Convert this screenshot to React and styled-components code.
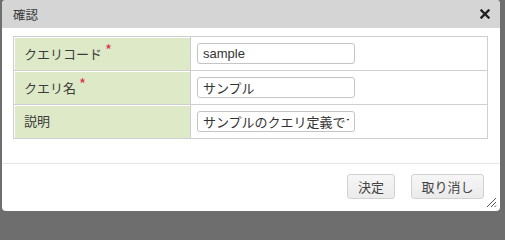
import React from "react";
import styled, { createGlobalStyle } from "styled-components";

const GlobalStyle = createGlobalStyle`
  html, body {
    margin: 0;
    padding: 0;
    background: #6e6e6e;
  }
  body {
    font-family: "Liberation Sans", "Noto Sans CJK JP", sans-serif;
    font-size: 13px;
    color: #333;
  }
`;

const Dialog = styled.div`
  position: relative;
  margin-left: 2px;
  width: 498px;
  height: 211px;
  background: #fff;
  border-radius: 4px;
  overflow: hidden;
  display: flex;
  flex-direction: column;
`;

const TitleBar = styled.div`
  height: 28px;
  background: #d5d5d5;
  display: flex;
  align-items: center;
  justify-content: space-between;
  padding: 0 10px 0 11px;
  box-sizing: border-box;
`;

const Title = styled.span`
  font-family: "Noto Sans CJK JP", sans-serif;
  font-size: 12.5px;
  color: #3a3a3a;
`;

const CloseButton = styled.button`
  border: none;
  background: transparent;
  padding: 0;
  width: 10px;
  height: 10px;
  display: flex;
  cursor: pointer;
`;

const Body = styled.div`
  padding: 8px 12px 0 11px;
  flex: 1;
`;

const Table = styled.table`
  width: 100%;
  border-collapse: collapse;
`;

const LabelCell = styled.td`
  width: 177px;
  height: 34px;
  box-sizing: border-box;
  border: 1px solid #cfcfcf;
  background: #dde9c7;
  box-shadow: inset 0 1px 0 #fff, inset 1px 0 0 #fff;
  padding: 8px 10px 0;
  vertical-align: top;
  font-family: "Noto Sans CJK JP", sans-serif;
  font-size: 13px;
  line-height: 16px;
  color: #3c3c3c;
`;

const Required = styled.span`
  color: #dc3050;
  font-size: 15px;
  margin-left: 3px;
  position: relative;
  top: -3px;
`;

const ValueCell = styled.td`
  border: 1px solid #cfcfcf;
  padding: 0 6px;
  vertical-align: middle;
`;

const Input = styled.input`
  display: block;
  width: 158px;
  height: 21px;
  box-sizing: border-box;
  border: 1px solid #c4c4c4;
  border-radius: 3px;
  padding: 0 5px;
  font-family: "Liberation Sans", "Noto Sans CJK JP", sans-serif;
  font-size: 13px;
  color: #333;
  background: #fff;
  outline: none;
`;

const Footer = styled.div`
  border-top: 1px solid #e6e6e6;
  height: 48px;
  box-sizing: border-box;
  display: flex;
  justify-content: flex-end;
  align-items: center;
  gap: 16px;
  padding: 0 16px 3px 0;
`;

const Button = styled.button`
  height: 25px;
  min-width: ${(p) => p.width}px;
  box-sizing: border-box;
  border: 1px solid #d2d2d2;
  border-radius: 3px;
  background: linear-gradient(#f6f6f6, #ebebeb);
  font-family: "Noto Sans CJK JP", sans-serif;
  font-size: 13px;
  color: #444;
  padding: 0 8px;
  cursor: pointer;
`;

const Grip = styled.svg`
  position: absolute;
  right: 3px;
  bottom: 3px;
`;

const fields = [
  { label: "クエリコード", value: "sample", required: true },
  { label: "クエリ名", value: "サンプル", required: true },
  { label: "説明", value: "サンプルのクエリ定義です。", required: false },
];

export default function App() {
  return (
    <>
      <GlobalStyle />
      <Dialog>
        <TitleBar>
          <Title>確認</Title>
          <CloseButton aria-label="close">
            <svg width="10" height="10" viewBox="0 0 10 10">
              <path d="M1.5 1.5 L8.5 8.5 M8.5 1.5 L1.5 8.5" stroke="#222" strokeWidth="2.4" strokeLinecap="square" />
            </svg>
          </CloseButton>
        </TitleBar>
        <Body>
          <Table>
            <tbody>
              {fields.map((f) => (
                <tr key={f.label}>
                  <LabelCell>
                    {f.label}
                    {f.required && <Required>*</Required>}
                  </LabelCell>
                  <ValueCell>
                    <Input defaultValue={f.value} />
                  </ValueCell>
                </tr>
              ))}
            </tbody>
          </Table>
        </Body>
        <Footer>
          <Button width={48}>決定</Button>
          <Button width={73}>取り消し</Button>
        </Footer>
        <Grip width="12" height="12" viewBox="0 0 12 12">
          <path d="M11 2 L2 11 M11 6 L6 11 M11 9.5 L9.5 11" stroke="#555" strokeWidth="1" />
        </Grip>
      </Dialog>
    </>
  );
}
